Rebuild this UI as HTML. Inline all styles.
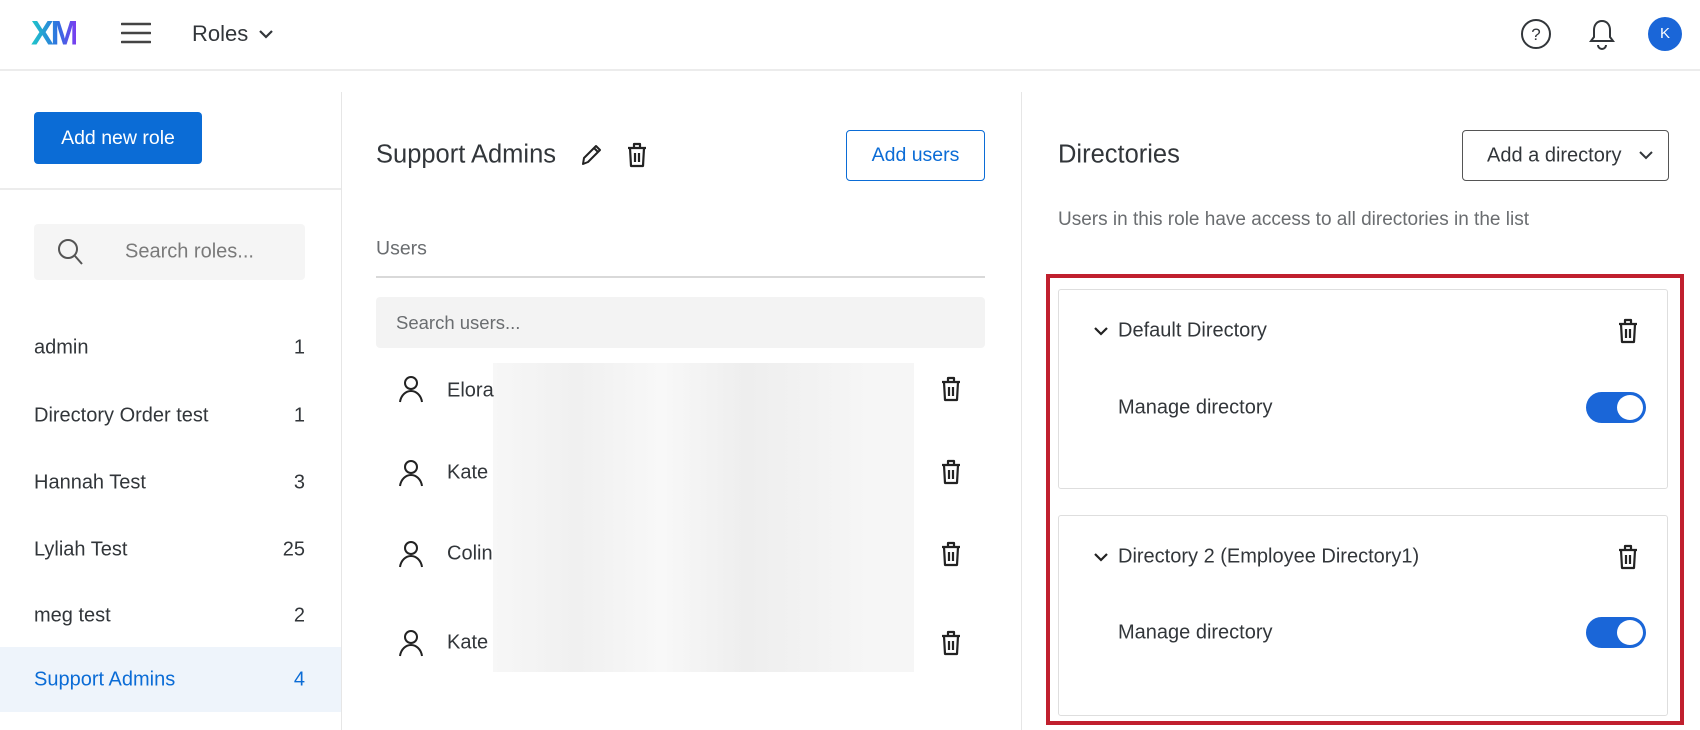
<!DOCTYPE html>
<html><head><meta charset="utf-8"><style>
*{margin:0;padding:0;box-sizing:border-box}
body{width:1700px;height:730px;overflow:hidden;background:#fff;font-family:"Liberation Sans",sans-serif;color:#32363a;position:relative}
.a{position:absolute}
.t{position:absolute;white-space:nowrap;transform:translateY(-50%)}
.trash{position:absolute;width:22px;height:28px}
.row{font-size:20px}
</style></head><body>
<!-- header -->
<div class="t" style="left:31px;top:34px;font-size:34px;font-weight:bold;letter-spacing:-3px;background:linear-gradient(90deg,#1ec9c9,#2f6fe0 60%,#7a3ef0);-webkit-background-clip:text;color:transparent">XM</div>
<svg class="a" style="left:121px;top:22px" width="30" height="22"><path d="M1 2H29M1 11H29M1 20H29" stroke="#444" stroke-width="2.6" stroke-linecap="round"/></svg>
<div class="t" style="left:192px;top:34px;font-size:22px">Roles</div>
<svg class="a" style="left:258px;top:29px" width="16" height="11"><path d="M2 2l6 6 6-6" stroke="#32363a" stroke-width="2.2" fill="none"/></svg>
<svg class="a" style="left:1520px;top:18px" width="32" height="32"><circle cx="16" cy="16" r="14" stroke="#32363a" stroke-width="2" fill="none"/><text x="16" y="22" font-size="17" text-anchor="middle" fill="#32363a" font-family="Liberation Sans">?</text></svg>
<svg class="a" style="left:1588px;top:18px" width="28" height="32"><path d="M14 3c-5 0-8 4-8 9v7l-3 4h22l-3-4v-7c0-5-3-9-8-9z" stroke="#32363a" stroke-width="2" fill="none"/><path d="M10 27a4 4 0 0 0 8 0" stroke="#32363a" stroke-width="2" fill="none"/></svg>
<div class="a" style="left:1648px;top:17px;width:34px;height:34px;border-radius:50%;background:#1a66d8;color:#fff;font-size:15px;text-align:center;line-height:34px">K</div>
<div class="a" style="left:0;top:69px;width:1700px;height:2px;background:#ececec"></div>
<!-- dividers -->
<div class="a" style="left:341px;top:92px;width:1px;height:638px;background:#e6e6e6"></div>
<div class="a" style="left:1021px;top:92px;width:1px;height:638px;background:#e6e6e6"></div>
<div class="a" style="left:0;top:188px;width:341px;height:2px;background:#ececec"></div>
<!-- left -->
<div class="a" style="left:34px;top:112px;width:168px;height:52px;background:#0b6cd6;border-radius:4px;color:#fff;font-size:19.5px;text-align:center;line-height:52px">Add new role</div>
<div class="a" style="left:34px;top:224px;width:271px;height:56px;background:#f5f5f5;border-radius:4px"></div>
<svg class="a" style="left:57px;top:238px" width="28" height="30"><circle cx="11" cy="11" r="9" stroke="#555" stroke-width="2" fill="none"/><path d="M18 18l7 8" stroke="#555" stroke-width="2"/></svg>
<div class="t" style="left:125px;top:252px;font-size:20px;color:#7a7a7a">Search roles...</div>
<div class="a" style="left:0;top:647px;width:341px;height:65px;background:#eef4fb"></div>
<div class="t row" style="left:34px;top:348px">admin</div><div class="t row" style="right:1395px;top:348px">1</div>
<div class="t row" style="left:34px;top:416px">Directory Order test</div><div class="t row" style="right:1395px;top:416px">1</div>
<div class="t row" style="left:34px;top:483px">Hannah Test</div><div class="t row" style="right:1395px;top:483px">3</div>
<div class="t row" style="left:34px;top:550px">Lyliah Test</div><div class="t row" style="right:1395px;top:550px">25</div>
<div class="t row" style="left:34px;top:616px">meg test</div><div class="t row" style="right:1395px;top:616px">2</div>
<div class="t row" style="left:34px;top:680px;color:#0b6cd6">Support Admins</div><div class="t row" style="right:1395px;top:680px;color:#0b6cd6">4</div>
<!-- middle -->
<div class="t" style="left:376px;top:155px;font-size:25.5px">Support Admins</div>
<svg class="a" style="left:579px;top:142px" width="24" height="26"><path d="M4 22l1-6L17 4l4 4L9 20z M15 6l4 4" stroke="#222" stroke-width="2" fill="none" stroke-linejoin="round"/></svg>
<svg class="trash" style="left:626px;top:141px" viewBox="0 0 22 28"><path d="M2 7h18M8 7V3h6v4M4 7l1 18h12l1-18M9 12v9M13 12v9" stroke="#222" stroke-width="2.2" fill="none" stroke-linejoin="round"/></svg>
<div class="a" style="left:846px;top:130px;width:139px;height:51px;border:1.5px solid #0b6cd6;border-radius:4px;color:#0b6cd6;font-size:19.5px;text-align:center;line-height:48px">Add users</div>
<div class="t" style="left:376px;top:249px;font-size:19.5px;color:#6a6d70">Users</div>
<div class="a" style="left:376px;top:276px;width:609px;height:2px;background:#d9d9d9"></div>
<div class="a" style="left:376px;top:297px;width:609px;height:51px;background:#f3f3f3;border-radius:4px"></div>
<div class="t" style="left:396px;top:323px;font-size:18.5px;color:#6a6d70">Search users...</div>
<div class="a" style="left:493px;top:363px;width:421px;height:309px;background:linear-gradient(90deg,#f7f7f7,#f0f0f0 20%,#f8f8f8 40%,#eeeeee 60%,#f6f6f6 90%)"></div>
<svg class="a" style="left:398px;top:375px" width="26" height="28"><circle cx="13" cy="8" r="6" stroke="#222" stroke-width="2" fill="none"/><path d="M2 27c1-7 6-11 11-11s10 4 11 11" stroke="#222" stroke-width="2" fill="none"/></svg>
<svg class="a" style="left:398px;top:459px" width="26" height="28"><circle cx="13" cy="8" r="6" stroke="#222" stroke-width="2" fill="none"/><path d="M2 27c1-7 6-11 11-11s10 4 11 11" stroke="#222" stroke-width="2" fill="none"/></svg>
<svg class="a" style="left:398px;top:540px" width="26" height="28"><circle cx="13" cy="8" r="6" stroke="#222" stroke-width="2" fill="none"/><path d="M2 27c1-7 6-11 11-11s10 4 11 11" stroke="#222" stroke-width="2" fill="none"/></svg>
<svg class="a" style="left:398px;top:629px" width="26" height="28"><circle cx="13" cy="8" r="6" stroke="#222" stroke-width="2" fill="none"/><path d="M2 27c1-7 6-11 11-11s10 4 11 11" stroke="#222" stroke-width="2" fill="none"/></svg>
<div class="t row" style="left:447px;top:391px">Elora</div>
<div class="t row" style="left:447px;top:473px">Kate</div>
<div class="t row" style="left:447px;top:554px">Colin</div>
<div class="t row" style="left:447px;top:643px">Kate</div>
<svg class="trash" style="left:940px;top:375px" viewBox="0 0 22 28"><path d="M2 7h18M8 7V3h6v4M4 7l1 18h12l1-18M9 12v9M13 12v9" stroke="#222" stroke-width="2.2" fill="none" stroke-linejoin="round"/></svg>
<svg class="trash" style="left:940px;top:458px" viewBox="0 0 22 28"><path d="M2 7h18M8 7V3h6v4M4 7l1 18h12l1-18M9 12v9M13 12v9" stroke="#222" stroke-width="2.2" fill="none" stroke-linejoin="round"/></svg>
<svg class="trash" style="left:940px;top:540px" viewBox="0 0 22 28"><path d="M2 7h18M8 7V3h6v4M4 7l1 18h12l1-18M9 12v9M13 12v9" stroke="#222" stroke-width="2.2" fill="none" stroke-linejoin="round"/></svg>
<svg class="trash" style="left:940px;top:629px" viewBox="0 0 22 28"><path d="M2 7h18M8 7V3h6v4M4 7l1 18h12l1-18M9 12v9M13 12v9" stroke="#222" stroke-width="2.2" fill="none" stroke-linejoin="round"/></svg>
<!-- right -->
<div class="t" style="left:1058px;top:155px;font-size:25.5px">Directories</div>
<div class="a" style="left:1462px;top:130px;width:207px;height:51px;border:1.5px solid #555;border-radius:4px"></div>
<div class="t" style="left:1487px;top:156px;font-size:20px">Add a directory</div>
<svg class="a" style="left:1638px;top:150px" width="16" height="11"><path d="M2 2l6 6 6-6" stroke="#32363a" stroke-width="2" fill="none"/></svg>
<div class="t" style="left:1058px;top:220px;font-size:19px;color:#6a6d70">Users in this role have access to all directories in the list</div>
<div class="a" style="left:1046px;top:274px;width:638px;height:451px;border:4px solid #c0202e"></div>
<div class="a" style="left:1058px;top:289px;width:610px;height:200px;border:1.5px solid #dedede;border-radius:3px"></div>
<div class="a" style="left:1058px;top:515px;width:610px;height:201px;border:1.5px solid #dedede;border-radius:3px"></div>
<svg class="a" style="left:1093px;top:326px" width="16" height="11"><path d="M2 2l6 6 6-6" stroke="#222" stroke-width="2.2" fill="none"/></svg>
<div class="t row" style="left:1118px;top:331px">Default Directory</div>
<svg class="trash" style="left:1617px;top:317px" viewBox="0 0 22 28"><path d="M2 7h18M8 7V3h6v4M4 7l1 18h12l1-18M9 12v9M13 12v9" stroke="#222" stroke-width="2.2" fill="none" stroke-linejoin="round"/></svg>
<div class="t row" style="left:1118px;top:408px">Manage directory</div>
<div class="a" style="left:1586px;top:392px;width:60px;height:31px;border-radius:16px;background:#1a66d8"></div>
<div class="a" style="left:1617px;top:395px;width:26px;height:25px;border-radius:50%;background:#fff"></div>
<svg class="a" style="left:1093px;top:552px" width="16" height="11"><path d="M2 2l6 6 6-6" stroke="#222" stroke-width="2.2" fill="none"/></svg>
<div class="t row" style="left:1118px;top:557px">Directory 2 (Employee Directory1)</div>
<svg class="trash" style="left:1617px;top:543px" viewBox="0 0 22 28"><path d="M2 7h18M8 7V3h6v4M4 7l1 18h12l1-18M9 12v9M13 12v9" stroke="#222" stroke-width="2.2" fill="none" stroke-linejoin="round"/></svg>
<div class="t row" style="left:1118px;top:633px">Manage directory</div>
<div class="a" style="left:1586px;top:617px;width:60px;height:31px;border-radius:16px;background:#1a66d8"></div>
<div class="a" style="left:1617px;top:620px;width:26px;height:25px;border-radius:50%;background:#fff"></div>
</body></html>
